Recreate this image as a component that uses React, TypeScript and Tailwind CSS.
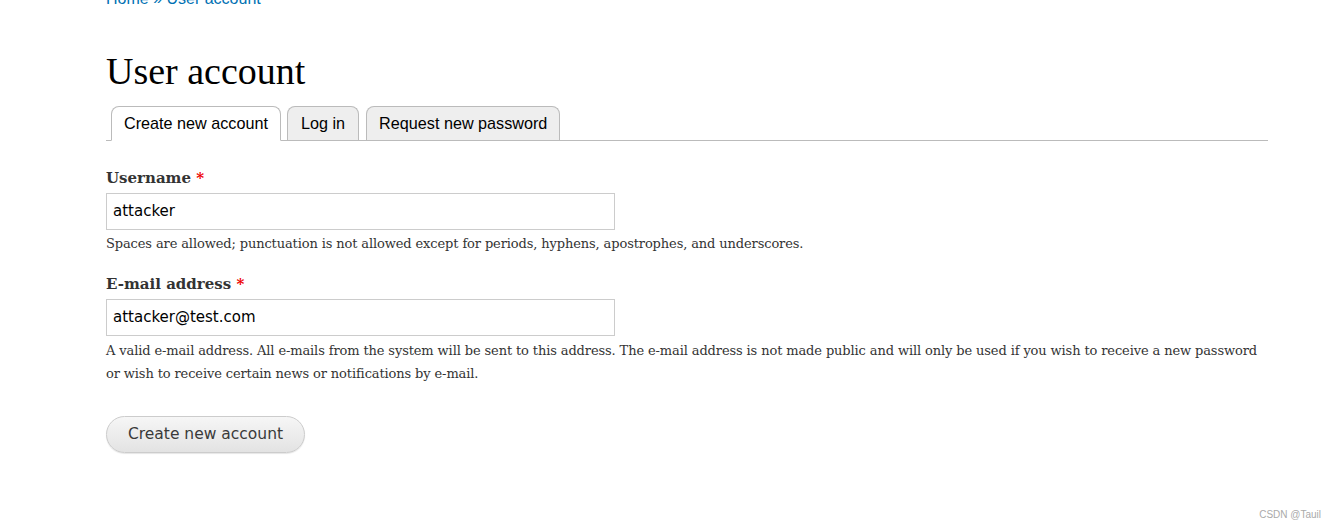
import React from "react";

const serif = { fontFamily: '"DejaVu Serif", Georgia, serif' } as React.CSSProperties;

export default function App() {
  return (
    <div className="relative w-[1336px] h-[530px] bg-white overflow-hidden">
      <div className="pl-[106px] pr-[68px]">
        <div className="-mt-[9px] h-[16px] text-[16px] leading-[16px] text-[#0071b3] font-['Liberation_Sans',Arial,sans-serif]">
          Home » User account
        </div>
        <h1 className="mt-[44px] h-[40px] text-[38px] leading-[40px] text-black font-['Liberation_Serif',Georgia,serif]">
          User account
        </h1>
        <div className="mt-[15px] flex items-end gap-[6px] border-b border-[#bbb] pl-[5px] h-[35px] font-['Liberation_Sans',Arial,sans-serif] text-[16.2px]">
          <div className="h-[35px] -mb-px px-[12px] flex items-center bg-white border border-[#bbb] border-b-white rounded-t-[8px] text-black">Create new account</div>
          <div className="h-[34px] px-[13px] flex items-center bg-[#eee] border border-[#bbb] border-b-0 rounded-t-[8px] text-black">Log in</div>
          <div className="h-[34px] px-[12px] flex items-center bg-[#eee] border border-[#bbb] border-b-0 rounded-t-[8px] text-black ml-[1px]">Request new password</div>
        </div>

        <div className="mt-[28px]" style={serif}>
          <div className="text-[15px] leading-[18px] font-bold text-[#333]">
            Username <span className="text-[#e00]">*</span>
          </div>
          <div className="mt-[6px] w-[509px] h-[37px] border border-[#ccc] px-[6px] flex items-center text-[15px] text-black font-['DejaVu_Sans',Verdana,sans-serif]">attacker</div>
          <div className="mt-[4px] text-[13px] leading-[20px] text-[#333] tracking-[-0.12px]">
            Spaces are allowed; punctuation is not allowed except for periods, hyphens, apostrophes, and underscores.
          </div>

          <div className="mt-[21px] text-[15px] leading-[18px] font-bold text-[#333]">
            E-mail address <span className="text-[#e00]">*</span>
          </div>
          <div className="mt-[6px] w-[509px] h-[37px] border border-[#ccc] px-[6px] flex items-center text-[15px] text-black font-['DejaVu_Sans',Verdana,sans-serif]">attacker@test.com</div>
          <div className="mt-[3px] text-[13px] leading-[23px] text-[#333] max-w-[1162px] tracking-[-0.12px]">
            A valid e-mail address. All e-mails from the system will be sent to this address. The e-mail address is not made public and will only be used if you wish to receive a new password or wish to receive certain news or notifications by e-mail.
          </div>
        </div>

        <button className="mt-[31px] w-[199px] h-[37px] rounded-full border border-[#ccc] bg-gradient-to-b from-[#f6f6f6] to-[#e3e3e3] text-[15.5px] text-[#3a3a3a] font-['DejaVu_Sans',Verdana,sans-serif] shadow-[0_1px_1px_rgba(0,0,0,0.1)]">
          Create new account
        </button>
      </div>
      <div className="absolute right-[15px] bottom-[8px] text-[10px] text-[#aaa] font-['Liberation_Sans',Arial,sans-serif]">CSDN @Tauil</div>
    </div>
  );
}
